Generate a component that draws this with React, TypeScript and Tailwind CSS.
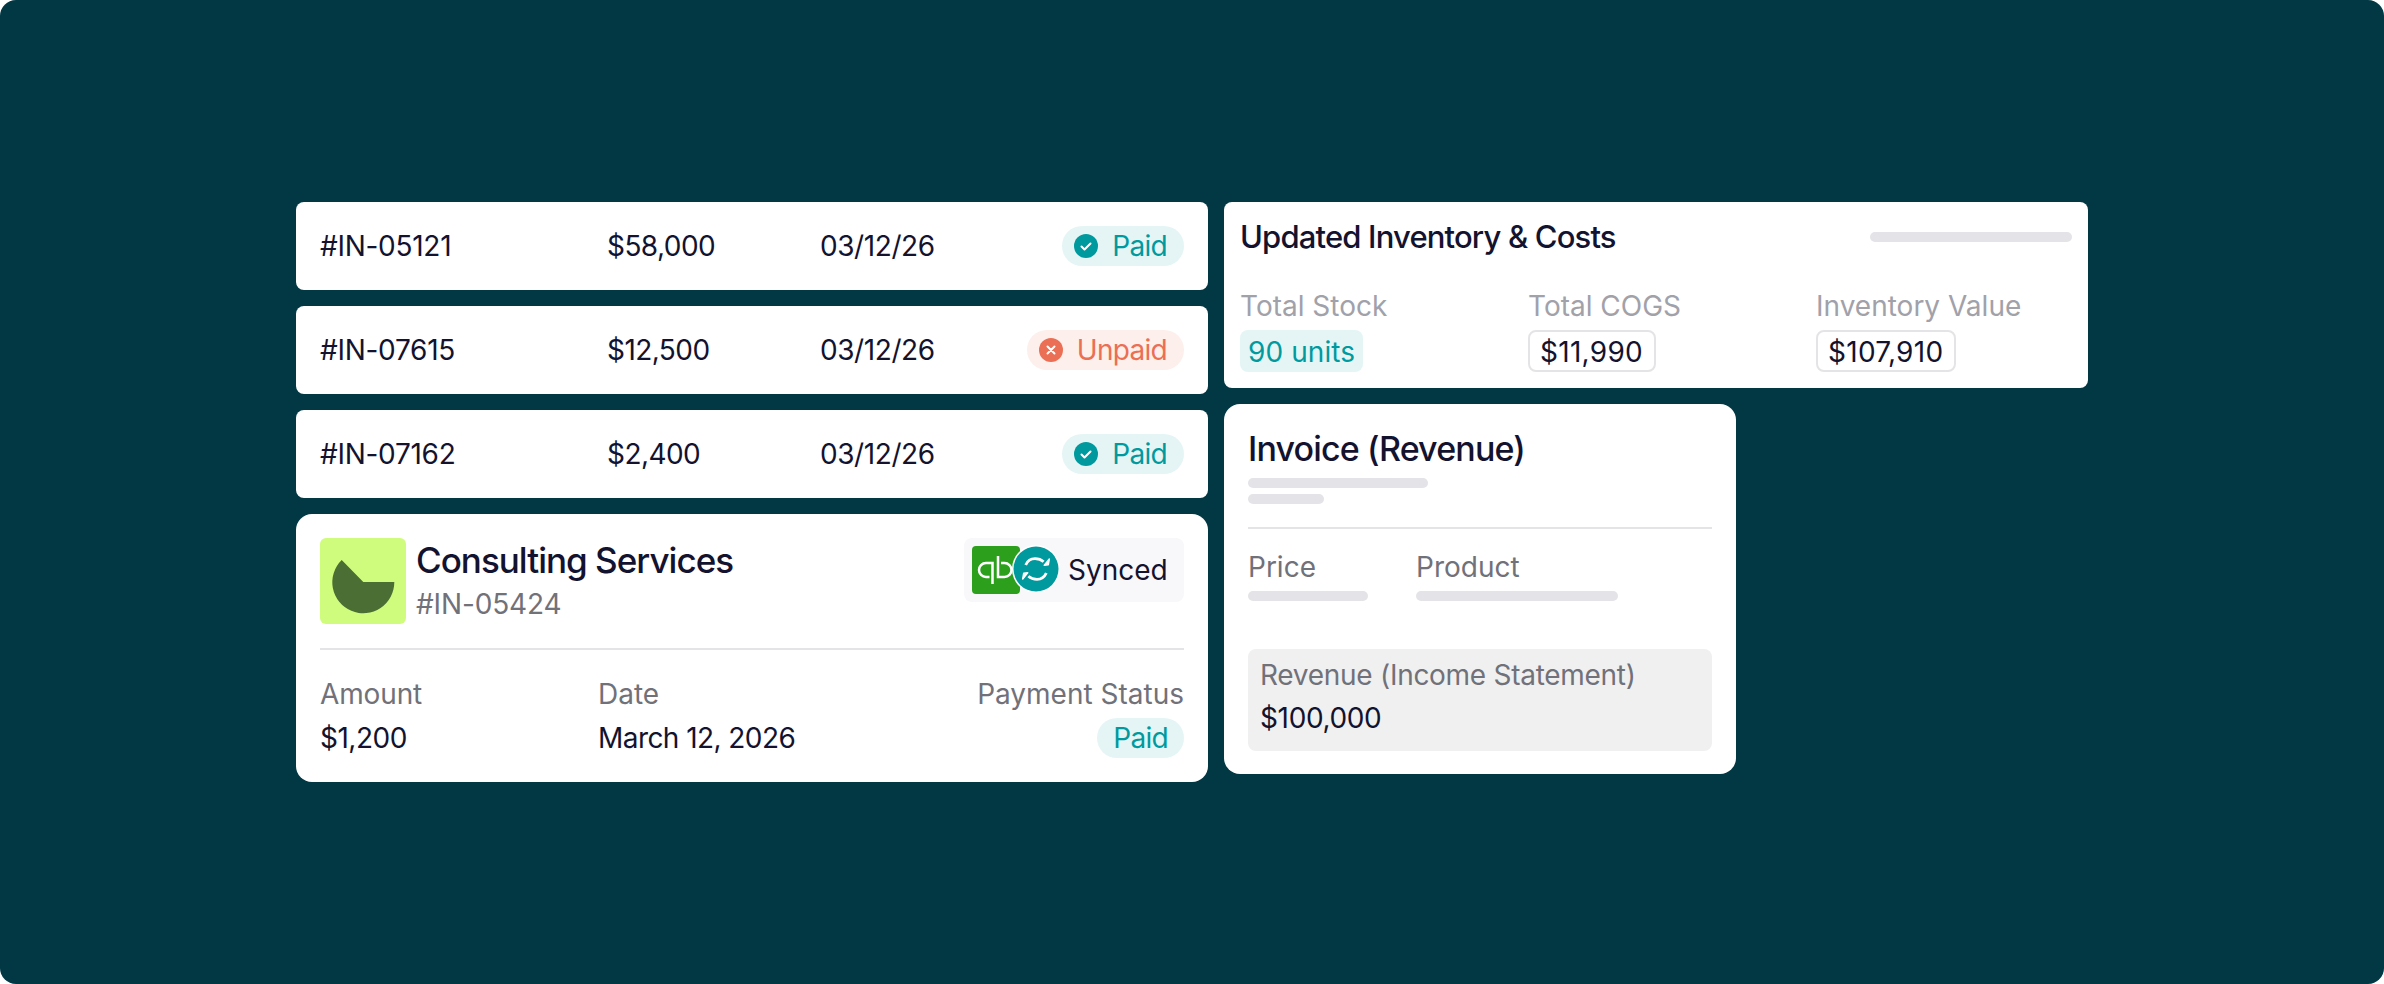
import React from "react";

const Check = () => (
  <svg width="24" height="24" viewBox="0 0 24 24" className="shrink-0">
    <circle cx="12" cy="12" r="12" fill="#009a9e" />
    <path d="M7.5 12.5l3 3 6-6" fill="none" stroke="#fff" strokeWidth="2" strokeLinecap="round" strokeLinejoin="round" />
  </svg>
);
const Cross = () => (
  <svg width="24" height="24" viewBox="0 0 24 24" className="shrink-0">
    <circle cx="12" cy="12" r="12" fill="#eb6f54" />
    <path d="M8.500 8.500l7 7M15.500 8.500l-7 7" fill="none" stroke="#fff" strokeWidth="2" strokeLinecap="round" />
  </svg>
);

const Row = ({ id, amt, paid }: { id: string; amt: string; paid: boolean }) => (
  <div className="h-[88px] rounded-lg bg-white pl-6 pr-6 flex items-center text-[28px] text-[#13132f]">
    <span className="w-[287px] tracking-[-0.01em]">{id}</span>
    <span className="w-[213px] tracking-[-0.02em]">{amt}</span>
    <span className="tracking-[-0.015em]">03/12/26</span>
    {paid ? (
      <span className="ml-auto h-10 rounded-[20px] bg-[#e5f5f5] pl-3 pr-[17px] flex items-center gap-[14px] text-[#009a9e] tracking-[-0.025em]">
        <Check />Paid
      </span>
    ) : (
      <span className="ml-auto h-10 rounded-[20px] bg-[#fdefeb] pl-3 pr-[17px] flex items-center gap-[14px] text-[#eb6f54] tracking-[-0.025em]">
        <Cross />Unpaid
      </span>
    )}
  </div>
);

const Bar = ({ w }: { w: string }) => <div className={`h-[10px] rounded-full bg-[#e4e4e8] ${w}`} />;

export default function App() {
  return (
    <div className="w-[2384px] h-[984px] bg-white font-['Inter',sans-serif]">
      <div className="w-full h-full rounded-2xl bg-[#013844] pl-[296px] pt-[202px] flex gap-4 items-start">
        <div className="w-[912px] flex flex-col gap-4">
          <Row id="#IN-05121" amt="$58,000" paid />
          <Row id="#IN-07615" amt="$12,500" paid={false} />
          <Row id="#IN-07162" amt="$2,400" paid />
          <div className="h-[268px] rounded-2xl bg-white p-6 text-[28px] text-[#13132f]">
            <div className="flex items-start h-[86px]">
              <svg width="86" height="86" viewBox="0 0 86 86" className="shrink-0">
                <rect width="86" height="86" rx="6" fill="#d0fc7e" />
                <path d="M43.3 44L74.3 44A31 31 0 1 1 21.700 22Z" fill="#4a6e34" />
              </svg>
              <div className="ml-[10px]">
                <div className="text-[35px] leading-[44px] font-medium tracking-[-0.028em]">Consulting Services</div>
                <div className="text-[#71717a] leading-[36px] mt-[4px] tracking-[-0.005em]">#IN-05424</div>
              </div>
              <div className="ml-auto h-16 w-[220px] rounded-lg bg-[#f8f8fb] pl-2 flex items-center">
                <div className="relative w-[48px] h-[48px] shrink-0">
                  <svg width="48" height="48" viewBox="0 0 48 48">
                    <rect width="48" height="48" rx="4" fill="#2ca01c" />
                    <path d="M17.500 31h-3.500a7 7 0 0 1 0-14h6.500v21M29 17h3.500a7 7 0 0 1 0 14h-6.500V10" fill="none" stroke="#fff" strokeWidth="2.500" />
                  </svg>
                  <svg width="48" height="48" viewBox="0 0 48 48" className="absolute left-[40px] top-[-1px]">
                    <circle cx="24" cy="24" r="24" fill="#fff" />
                    <circle cx="24" cy="24" r="22.500" fill="#009a9e" />
                    <path d="M13.700 20C15.500 16 19 13.700 23 13.700c3.500 0 6.300 1 8.600 3M34.300 28C32.500 32 29 34.300 25 34.300c-3.500 0-6.300-1-8.600-3" fill="none" stroke="#fff" strokeWidth="2.800" />
                    <path d="M37.300 14l-1 5.700-4 .6zM10.700 34l1-5.700 4-.6z" fill="#fff" stroke="#fff" strokeWidth="1.500" strokeLinejoin="round" />
                  </svg>
                </div>
                <span className="ml-[48px] text-[28px]">Synced</span>
              </div>
            </div>
            <div className="h-[2px] bg-[#e4e4e7] mt-6" />
            <div className="flex mt-[26px]">
              <div className="w-[278px]">
                <div className="text-[#71717a] leading-[36px] tracking-[-0.005em]">Amount</div>
                <div className="leading-[40px] mt-[6px] tracking-[-0.018em]">$1,200</div>
              </div>
              <div>
                <div className="text-[#71717a] leading-[36px]">Date</div>
                <div className="leading-[40px] mt-[6px] tracking-[-0.02em]">March 12, 2026</div>
              </div>
              <div className="ml-auto flex flex-col items-end">
                <div className="text-[#71717a] leading-[36px]">Payment Status</div>
                <div className="h-10 mt-[6px] rounded-[20px] bg-[#e5f5f5] px-4 flex items-center text-[#009a9e] tracking-[-0.025em]">Paid</div>
              </div>
            </div>
          </div>
        </div>
        <div className="w-[864px] flex flex-col gap-4 text-[#13132f]">
          <div className="h-[186px] rounded-lg bg-white p-4 text-[28px]">
            <div className="flex items-center justify-between h-[38px]">
              <div className="text-[31px] font-medium tracking-[-0.027em] leading-[38px]">Updated Inventory &amp; Costs</div>
              <Bar w="w-[202px]" />
            </div>
            <div className="grid grid-cols-3 gap-8 mt-[32px]">
              <div>
                <div className="text-[#a1a1aa] leading-[36px]">Total Stock</div>
                <div className="inline-flex h-[42px] mt-[6px] pt-[1px] items-center rounded-lg bg-[#e5f5f5] px-[8px] text-[#009a9e] tracking-[0.003em]">90 units</div>
              </div>
              <div>
                <div className="text-[#a1a1aa] leading-[36px]">Total COGS</div>
                <div className="inline-flex h-[42px] mt-[6px] pt-[1px] items-center rounded-lg border-2 border-[#e4e4e7] pl-[10px] pr-[11px] tracking-[0.01em]">$11,990</div>
              </div>
              <div>
                <div className="text-[#a1a1aa] leading-[36px]">Inventory Value</div>
                <div className="inline-flex h-[42px] mt-[6px] pt-[1px] items-center rounded-lg border-2 border-[#e4e4e7] pl-[10px] pr-[11px] tracking-[0.01em]">$107,910</div>
              </div>
            </div>
          </div>
          <div className="h-[370px] w-[512px] rounded-2xl bg-white p-6 text-[28px]">
            <div className="text-[34px] font-medium leading-[44px] tracking-[-0.025em] -mt-[1px]">Invoice (Revenue)</div>
            <div className="mt-[7px] flex flex-col gap-[6px]">
              <Bar w="w-[180px]" />
              <Bar w="w-[76px]" />
            </div>
            <div className="h-[2px] bg-[#e4e4e7] mt-[23px]" />
            <div className="flex mt-[20px]">
              <div className="w-[168px]">
                <div className="text-[#71717a] leading-[36px] mb-[6px]">Price</div>
                <Bar w="w-[120px]" />
              </div>
              <div>
                <div className="text-[#71717a] leading-[36px] mb-[6px]">Product</div>
                <Bar w="w-[202px]" />
              </div>
            </div>
            <div className="h-[102px] mt-[48px] rounded-lg bg-[#f0f0f0] px-3 pt-[8px]">
              <div className="text-[#71717a] leading-[36px] tracking-[-0.01em]">Revenue (Income Statement)</div>
              <div className="leading-[40px] mt-[5px] tracking-[-0.013em]">$100,000</div>
            </div>
          </div>
        </div>
      </div>
    </div>
  );
}
